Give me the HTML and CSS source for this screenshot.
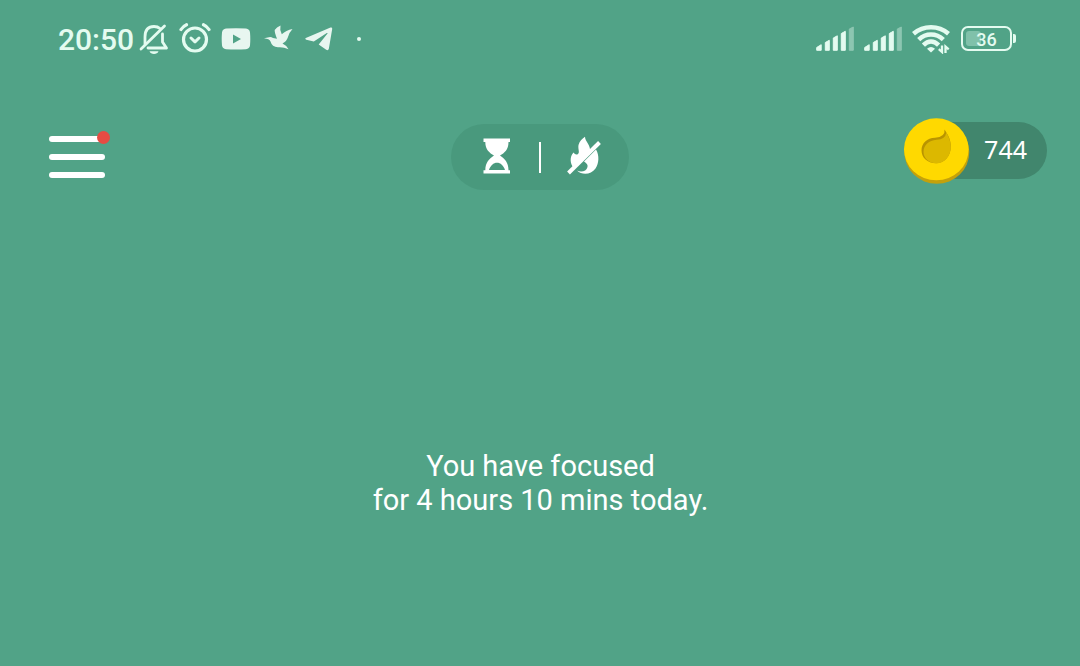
FILE: index.html
```html
<!DOCTYPE html>
<html lang="en">

<head>
    <meta charset="utf-8">
    <title>Focus</title>
    <link rel="stylesheet" href="styles.css">
</head>

<body>
    <div class="statusbar">
        <span class="clock">20:50</span>
        <svg class="bell" width="30" height="32" viewBox="0 0 30 32">
            <path d="M6 21V14C6 7 9.500 3.500 15 3.500C17.500 3.500 19.500 4.200 21 5.500M23.500 11V19L27.500 25H9" fill="none" stroke="currentColor" stroke-width="2.800" stroke-linejoin="round" stroke-linecap="round" />
            <path d="M2 26L25.500 3" stroke="currentColor" stroke-width="2.800" stroke-linecap="round" />
            <path d="M10.500 28.300H19.500C18.500 31.800 11.500 31.800 10.500 28.300Z" fill="currentColor" />
        </svg>
        <svg class="alarm" width="32" height="32" viewBox="0 0 32 32" fill="none" stroke="currentColor" stroke-linecap="round" stroke-linejoin="round">
            <circle cx="16" cy="17.500" r="11.500" stroke-width="3.200" />
            <path d="M12 16L16 19.800L20 16" stroke-width="3" />
            <path d="M2 7.500Q4 4.200 7.500 2.700M30 7.500Q28 4.200 24.500 2.700" stroke-width="3.200" />
        </svg>
        <svg class="youtube" width="30" height="22" viewBox="0 0 30 22">
            <path fill="currentColor" fill-rule="evenodd" d="M5 .6Q15-.2 25 .6Q28.500 1 29 4.500Q29.600 11 29 17.500Q28.500 20.800 25 21.200Q15 22 5 21.200Q1.500 20.800 1 17.500Q.4 11 1 4.500Q1.500 1 5 .6ZM12 6.500V15.500L20 11Z" />
        </svg>
        <svg class="bird" width="30" height="26" viewBox="0 0 30 26">
            <path fill="currentColor" d="M0 13.300L5 12.200Q7 11.700 9 13L13 13.800Q10.500 7.500 10.700 5Q12.500 2 16.500 .5Q15.500 4.500 17.800 9.300Q22 5.300 28.500 4Q25.500 7 24 12Q22.500 16.500 18.500 18.500Q22 20 24.500 24.200Q19 21.700 14 22.300Q8 22 6.500 16.500Q5.500 13.900 0 13.300Z" />
        </svg>
        <svg class="plane" width="28" height="24" viewBox="0 0 28 24">
            <path fill="currentColor" d="M.8 11.100L25.500 .5Q27.400 0 27.200 2L23.900 21.500Q23.300 24 21.200 22.800L13.700 17.400L22.500 6.500Q22.800 5.600 21.800 6.100L8.800 14.500L1.300 12.700Q-.3 12 .8 11.100Z" />
        </svg>
        <span class="more-dot"></span>

        <div class="system">
            <svg class="signal" width="38" height="26" viewBox="0 0 38 26" fill="currentColor" stroke="currentColor" stroke-linejoin="round">
                <path d="M.7 24.300V21.500L5.200 18.700V24.300ZM9.300 24.300V16.500L13.300 14.300V24.300ZM17.300 24.300V12L21.300 9.800V24.300ZM25.300 24.300V7.500L29.300 5.300V24.300Z" />
                <path class="weak" d="M33.300 24.300V3L37.300 1V24.300Z" />
            </svg>
            <svg class="signal" width="38" height="26" viewBox="0 0 38 26" fill="currentColor" stroke="currentColor" stroke-linejoin="round">
                <path d="M.7 24.300V21.500L5.200 18.700V24.300ZM9.300 24.300V16.500L13.300 14.300V24.300ZM17.300 24.300V12L21.300 9.800V24.300ZM25.300 24.300V7.500L29.300 5.300V24.300Z" />
                <path class="weak" d="M33.300 24.300V3L37.300 1V24.300Z" />
            </svg>
            <svg class="wifi" width="38" height="30" viewBox="0 0 38 30">
                <path d="M1.500 9.700Q9 3.200 19 3.200T36.500 9.700M6.700 15.600Q12 10.500 19 10.500T31.300 15.600M11.400 21.100Q15 17.500 19 17.500T26.600 21.100" fill="none" stroke="currentColor" stroke-width="4.500" />
                <path d="M15 24.800Q19 21 23 24.800L19 28.600Z" fill="currentColor" />
                <path d="M30 21.500V28L26.800 25.200M33.500 29V22.500L36.700 25.300" fill="none" stroke="currentColor" stroke-width="2.300" />
            </svg>
            <div class="battery">
                <span class="level"></span>
                <span class="percent">36</span>
            </div>
            <span class="battery-tip"></span>
        </div>
    </div>

    <div class="toolbar">
        <div class="menu">
            <span></span>
            <span></span>
            <span></span>
            <i class="badge"></i>
        </div>

        <div class="modes">
            <svg class="hourglass" width="28" height="36" viewBox="0 0 28 36">
                <path fill="currentColor" fill-rule="evenodd" d="M.5 .5H27V4H25.500C25.500 11.500 21.500 15 17 17.500C21.500 20.500 25.500 24.500 25.500 32.200H27V35.500H.5V32.200H2.300C2.300 24.500 6.500 20.500 11 17.500C6.500 15 2.300 11.500 2.300 4H.5ZM6 32H22C20.500 27.500 17.500 24.800 14 24.800S7.500 27.500 6 32Z" />
            </svg>
            <span class="divider"></span>
            <svg class="flame" width="36" height="40" viewBox="0 0 36 40">
                <path fill="currentColor" d="M19 .8C19 6 25 8.500 24 16L7.500 31.500C4 28 3.500 20.500 7.500 16.500Q9.500 19.500 12 18C14 16.500 11.800 13 12.500 9C13.500 5 16.500 2.500 19 .8Z" />
                <path fill="currentColor" d="M30 13.500C33.500 19.500 33 27.500 29.500 32.500C25 38.800 16 39.300 11 34.500C15 36.500 20.500 35.500 21.500 31C22 28.500 20.500 27 18 25.500Z" />
                <path d="M2.500 37L33.500 6.500" stroke="currentColor" stroke-width="4" />
            </svg>
        </div>

        <div class="coins">
            <svg class="coin" width="68" height="68" viewBox="0 0 68 68">
                <ellipse class="coin-edge" cx="33.800" cy="35" rx="32.500" ry="31.800" />
                <ellipse class="coin-face" cx="33.300" cy="32.300" rx="32.300" ry="31" />
                <path class="drop-shade" d="M41.500 12.500C45 18 47.800 22 47.800 29.500C47.800 39 41.500 46.300 33 46.300C24.500 46.300 18.500 40.500 18.500 33.500C18.500 26 24 21 32 20.700Q42.500 20 41.500 12.500Z" />
                <path class="drop" d="M43.300 15.500C45.700 20 47.800 24 47.800 30C47.800 39 41.500 46.300 33.500 46.300C26 46.300 20.500 41 20.500 35C20.500 28 26 23.300 33.500 22.800Q42.500 22.300 43.300 15.500Z" />
            </svg>
            <span class="amount">744</span>
        </div>
    </div>

    <p class="summary">You have focused<br>for 4 hours 10 mins today.</p>
</body>

</html>
```
FILE: styles.css
```css
html,
body {
    margin: 0;
    padding: 0;
}

body {
    height: 666px;
    overflow: hidden;
    background: #51a387;
    color: #fff;
    font-family: Roboto, sans-serif;
}

svg {
    display: block;
    flex: none;
}

/* Phone status bar */
.statusbar {
    display: flex;
    align-items: center;
    height: 78px;
    padding: 0 64px 0 58px;
    color: #e4fbf0;
}

.clock {
    width: 81px;
    font-size: 30px;
    font-weight: 500;
    line-height: 36px;
    padding-top: 2px;
}

.alarm {
    margin-left: 10px;
    margin-bottom: 2px;
}

.youtube {
    margin-left: 10px;
    color: #e8f6f0;
}

.bird {
    margin-left: 13px;
    margin-bottom: 2px;
    color: #e8f6f0;
}

.plane {
    margin-left: 11px;
    color: #e8f6f0;
}

.more-dot {
    width: 4px;
    height: 4px;
    margin-left: 24px;
    border-radius: 50%;
    background: currentColor;
}

.system {
    display: flex;
    align-items: center;
    margin-left: auto;
}

.signal {
    margin-right: 10px;
}

.weak {
    opacity: .4;
}

.battery {
    position: relative;
    box-sizing: border-box;
    width: 51px;
    height: 25px;
    margin-left: 11px;
    margin-bottom: 1px;
    padding: 3px;
    border: 2px solid currentColor;
    border-radius: 7px;
}

.level {
    display: block;
    width: 15px;
    height: 15px;
    border-radius: 3px;
    background: #80c1aa;
}

/* Number sits over the charge level */
.percent {
    position: absolute;
    top: 1px;
    left: 0;
    width: 100%;
    text-align: center;
    font-size: 18px;
    font-weight: 500;
    line-height: 21px;
}

.battery-tip {
    width: 3px;
    height: 9px;
    margin-left: 1px;
    margin-bottom: 1px;
    border-radius: 0 2px 2px 0;
    background: currentColor;
}

/* Menu, timer mode and coins */
.toolbar {
    display: grid;
    grid-template-columns: 402px 178px 1fr;
    align-items: start;
    height: 112px;
    padding: 40px 33px 0 49px;
}

.menu {
    position: relative;
    display: flex;
    flex-direction: column;
    gap: 12px;
    width: 56px;
    margin-top: 18px;
}

.menu span {
    height: 6px;
    border-radius: 3px;
    background: #fff;
}

.badge {
    position: absolute;
    top: -5px;
    right: -5px;
    width: 13px;
    height: 13px;
    border-radius: 50%;
    background: #e64c43;
}

.modes {
    display: flex;
    align-items: center;
    height: 66px;
    margin-top: 6px;
    padding-left: 32px;
    box-sizing: border-box;
    border-radius: 33px;
    background: #49997d;
}

.hourglass {
    margin-bottom: 3px;
}

.divider {
    width: 2px;
    height: 31px;
    margin-left: 28px;
    background: #fff;
}

.flame {
    margin-left: 25px;
    margin-bottom: 2px;
}

.coins {
    display: flex;
    align-items: center;
    justify-content: flex-end;
    box-sizing: border-box;
    width: 126px;
    height: 57px;
    margin-top: 4px;
    margin-left: auto;
    padding-right: 20px;
    border-radius: 29px;
    background: #41866d;
}

.coin {
    margin-right: 13px;
}

.coin-edge {
    fill: #c4a10b;
}

.coin-face {
    fill: #ffd900;
}

.drop-shade {
    fill: #b99400;
}

.drop {
    fill: #dcb800;
}

.amount {
    font-family: "Noto Sans", sans-serif;
    font-size: 25px;
    line-height: 57px;
    margin-top: -2px;
}

.summary {
    margin: 219px 0 0;
    padding-left: 1px;
    text-align: center;
    font-size: 29px;
    line-height: 34px;
}
```
